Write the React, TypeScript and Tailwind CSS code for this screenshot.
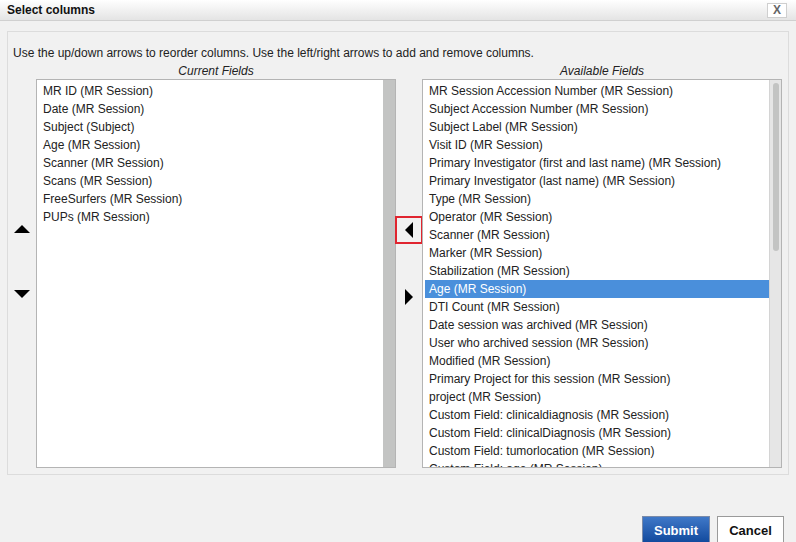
import React from "react";

const currentFields = [
  "MR ID (MR Session)",
  "Date (MR Session)",
  "Subject (Subject)",
  "Age (MR Session)",
  "Scanner (MR Session)",
  "Scans (MR Session)",
  "FreeSurfers (MR Session)",
  "PUPs (MR Session)",
];

const availableFields = [
  "MR Session Accession Number (MR Session)",
  "Subject Accession Number (MR Session)",
  "Subject Label (MR Session)",
  "Visit ID (MR Session)",
  "Primary Investigator (first and last name) (MR Session)",
  "Primary Investigator (last name) (MR Session)",
  "Type (MR Session)",
  "Operator (MR Session)",
  "Scanner (MR Session)",
  "Marker (MR Session)",
  "Stabilization (MR Session)",
  "Age (MR Session)",
  "DTI Count (MR Session)",
  "Date session was archived (MR Session)",
  "User who archived session (MR Session)",
  "Modified (MR Session)",
  "Primary Project for this session (MR Session)",
  "project (MR Session)",
  "Custom Field: clinicaldiagnosis (MR Session)",
  "Custom Field: clinicalDiagnosis (MR Session)",
  "Custom Field: tumorlocation (MR Session)",
  "Custom Field: age (MR Session)",
];

function Triangle({ dir }: { dir: "up" | "down" | "left" | "right" }) {
  const pts = {
    up: "0,8 8,0 16,8",
    down: "0,0 16,0 8,8",
    left: "9,0 9,16 1,8",
    right: "0,0 0,16 8,8",
  }[dir];
  const vertical = dir === "up" || dir === "down";
  return (
    <svg
      width={vertical ? 16 : 10}
      height={vertical ? 8 : 16}
      viewBox={vertical ? "0 0 16 8" : "0 0 10 16"}
    >
      <polygon points={pts} fill="#000" />
    </svg>
  );
}

export default function App() {
  return (
    <div
      className="w-[796px] h-[542px] overflow-hidden bg-[#f1f1f1] text-[#222]"
      style={{ fontFamily: '"Liberation Sans", Arial, sans-serif' }}
    >
      {/* title bar */}
      <div className="h-[21px] flex items-center justify-between pl-[7px] pr-[9px] bg-gradient-to-b from-white to-[#e4e4e4] border-b border-[#d0d0d0]">
        <span className="text-[12px] font-bold text-[#111]">Select columns</span>
        <button className="w-[20px] h-[15px] bg-white border border-[#cfcfcf] flex items-center justify-center text-[12px] font-bold leading-none text-[#666]">
          X
        </button>
      </div>

      <div className="mx-[7px] mt-[10px] h-[444px] border border-[#dcdcdc] pt-[13px]">
        <p className="pl-[5px] text-[12px] leading-[16px] text-[#222]">
          Use the up/down arrows to reorder columns. Use the left/right arrows to add and remove columns.
        </p>

        <div className="flex mt-[2px]">
          {/* up/down */}
          <div className="w-[28px] flex flex-col items-center pt-[162px] gap-[57px]">
            <Triangle dir="up" />
            <Triangle dir="down" />
          </div>

          {/* current */}
          <div className="w-[360px] flex flex-col">
            <div className="h-[16px] text-center italic text-[12px] leading-[16px]">Current Fields</div>
            <div className="h-[389px] flex border border-[#b4b4b4] bg-white">
              <ul className="flex-1 pt-[2px] pl-[6px] text-[12px]">
                {currentFields.map((f) => (
                  <li key={f} className="h-[18px] leading-[18px] whitespace-nowrap">
                    {f}
                  </li>
                ))}
              </ul>
              <div className="w-[12px] bg-[#c3c4c3]" />
            </div>
          </div>

          {/* add / remove */}
          <div className="w-[26px] flex flex-col items-center pt-[153px]">
            <button className="w-[28px] h-[28px] border-2 border-[#e0252f] flex items-center justify-center">
              <Triangle dir="left" />
            </button>
            <div className="mt-[45px] ml-[2px]">
              <Triangle dir="right" />
            </div>
          </div>

          {/* available */}
          <div className="w-[360px] flex flex-col">
            <div className="h-[16px] text-center italic text-[12px] leading-[16px]">Available Fields</div>
            <div className="h-[389px] flex border border-[#b4b4b4] bg-white overflow-hidden">
              <ul className="flex-1 pt-[2px] pl-[2px] text-[12px] overflow-hidden">
                {availableFields.map((f) => {
                  const selected = f === "Age (MR Session)";
                  return (
                    <li
                      key={f}
                      className={
                        selected
                          ? "h-[18px] leading-[18px] pl-[4px] whitespace-nowrap bg-[#4a8fdb] text-white"
                          : "h-[18px] leading-[18px] pl-[4px] whitespace-nowrap"
                      }
                    >
                      {f}
                    </li>
                  );
                })}
              </ul>
              <div className="w-[12px] bg-[#e6e6e6] border-l border-[#d4d4d4] flex justify-center pt-[3px]">
                <div className="w-[6px] h-[168px] rounded-full bg-[#c3c4c3]" />
              </div>
            </div>
          </div>
        </div>
      </div>

      {/* footer */}
      <div className="flex justify-end gap-[7px] pr-[12px] pt-[41px]">
        <button className="w-[68px] h-[30px] border border-[#7a8aa8] bg-gradient-to-b from-[#3f78c8] to-[#0b4599] text-white font-bold text-[13px]">
          Submit
        </button>
        <button className="w-[67px] h-[30px] border border-[#9a9a9a] bg-white text-[#111] font-bold text-[13px]">
          Cancel
        </button>
      </div>
    </div>
  );
}
